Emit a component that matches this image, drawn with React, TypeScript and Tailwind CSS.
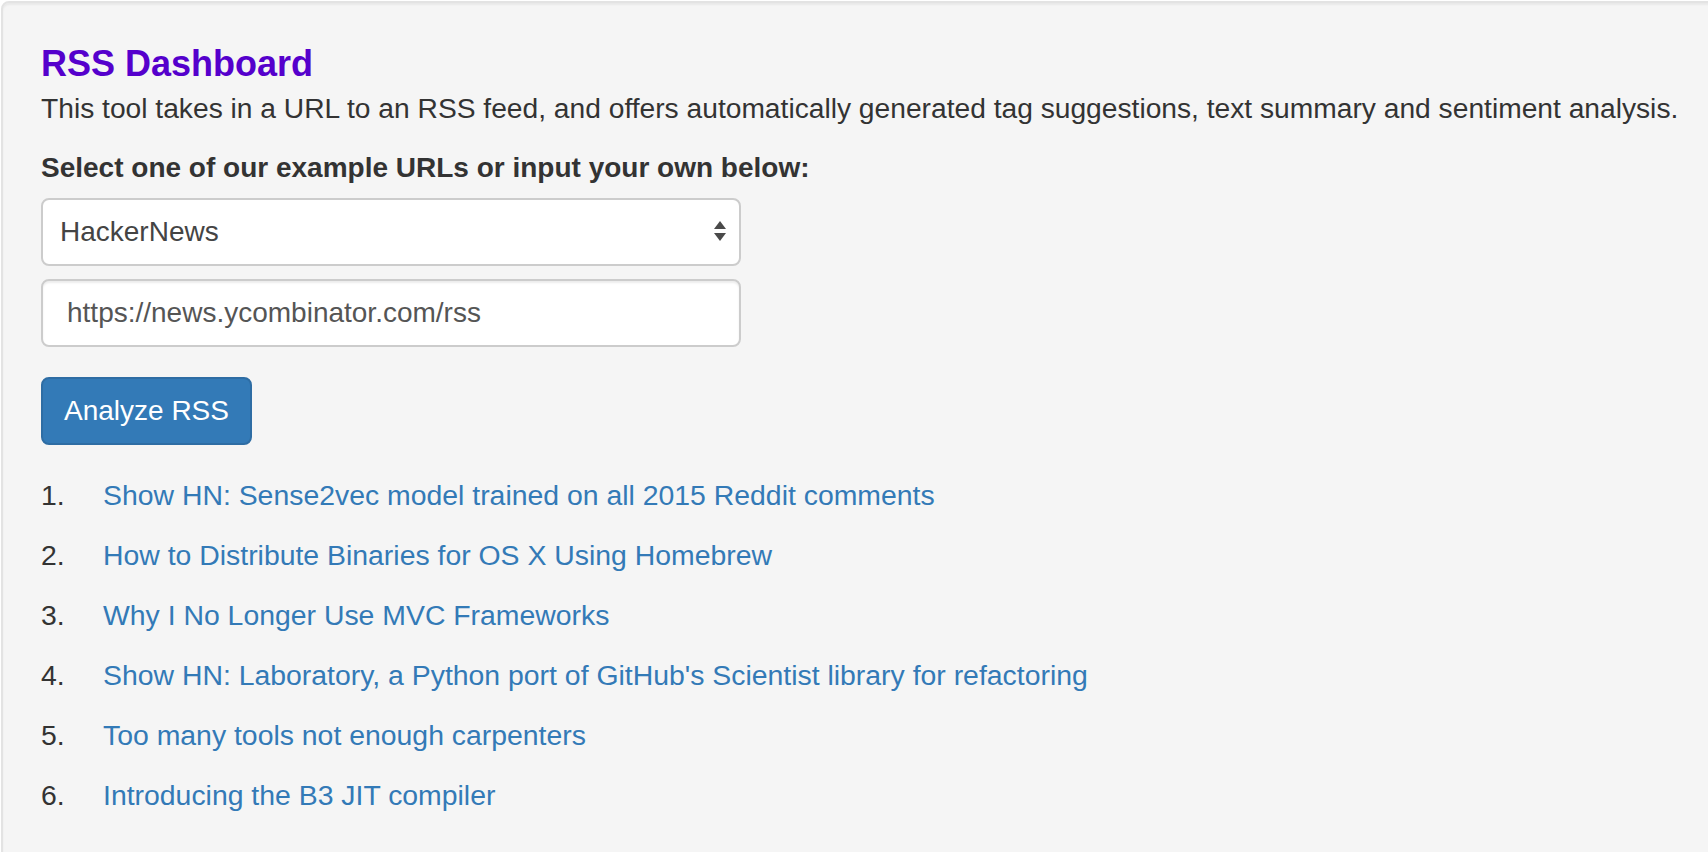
import React from "react"

const feedItems = [
    "Show HN: Sense2vec model trained on all 2015 Reddit comments",
    "How to Distribute Binaries for OS X Using Homebrew",
    "Why I No Longer Use MVC Frameworks",
    "Show HN: Laboratory, a Python port of GitHub's Scientist library for refactoring",
    "Too many tools not enough carpenters",
    "Introducing the B3 JIT compiler",
]

const SelectArrows = () => (
    <svg width="12" height="22" viewBox="0 0 12 22" className="block">
        <path d="M6 0 L12 8 L0 8 Z" fill="#4a4a4a" />
        <path d="M0 12 L12 12 L6 20 Z" fill="#4a4a4a" />
    </svg>
)

export default function App() {
    return (
        <div className="w-[1708px] h-[852px] overflow-hidden bg-white font-['Liberation_Sans',Arial,sans-serif] text-[#333]">
            <div className="ml-px mt-px w-[1780px] h-[900px] rounded-[8px] border-2 border-[#e3e3e3] bg-[#f5f5f5] shadow-[inset_0_2px_2px_rgba(0,0,0,0.05)] pl-[38px] pt-[41px]">
                <h4 className="text-[36px] leading-[40px] font-bold text-[#5500cc]">
                    RSS Dashboard
                </h4>
                <p className="mt-[4px] text-[28.2px] leading-[40px] whitespace-nowrap">
                    This tool takes in a URL to an RSS feed, and offers
                    automatically generated tag suggestions, text summary and
                    sentiment analysis.
                </p>

                <div className="mt-[20px] w-[700px]">
                    <label className="block text-[28px] leading-[40px] font-bold whitespace-nowrap">
                        Select one of our example URLs or input your own below:
                    </label>
                    <div className="relative mt-[10px]">
                        <select
                            defaultValue="hn"
                            className="appearance-none block w-full h-[68px] rounded-[8px] border-2 border-[#ccc] bg-white pl-[17px] pr-[40px] text-[28px] text-[#444] outline-none font-['Liberation_Sans',Arial,sans-serif]"
                        >
                            <option value="hn">HackerNews</option>
                        </select>
                        <div className="pointer-events-none absolute right-[15px] top-[23px]">
                            <SelectArrows />
                        </div>
                    </div>
                    <input
                        type="text"
                        defaultValue="https://news.ycombinator.com/rss"
                        className="block mt-[13px] w-full h-[68px] rounded-[8px] border-2 border-[#ccc] bg-white px-[24px] text-[28px] text-[#555] outline-none shadow-[inset_0_2px_2px_rgba(0,0,0,0.075)] font-['Liberation_Sans',Arial,sans-serif]"
                    />
                </div>

                <button className="mt-[30px] h-[68px] rounded-[8px] border-2 border-[#2e6da4] bg-[#337ab7] px-[21px] text-[28px] leading-[40px] text-white font-['Liberation_Sans',Arial,sans-serif]">
                    Analyze RSS
                </button>

                <ol className="mt-[20px]">
                    {feedItems.map((title, index) => (
                        <li
                            key={index}
                            className="flex text-[28.4px] leading-[60px] whitespace-nowrap"
                        >
                            <span className="w-[62px] shrink-0">
                                {index + 1}.
                            </span>
                            <a href="#" className="text-[#337ab7]">
                                {title}
                            </a>
                        </li>
                    ))}
                </ol>
            </div>
        </div>
    )
}
